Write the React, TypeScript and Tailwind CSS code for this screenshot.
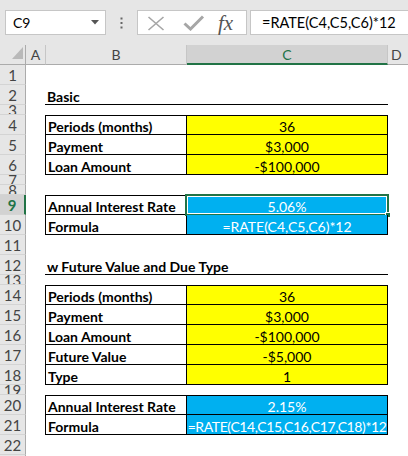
import React from "react";

type Cell = { text: string; cls?: string };
type Row = {
  n: number;
  h: number;
  kind?: "title" | "table";
  first?: boolean;
  b?: Cell;
  c?: Cell;
  selected?: boolean;
};

const YELLOW = "bg-[#ffff00] text-black";
const BLUE = "bg-[#00b0f0] text-white";

const rows: Row[] = [
  { n: 1, h: 20 },
  { n: 2, h: 20, kind: "title", b: { text: "Basic" } },
  { n: 3, h: 10 },
  { n: 4, h: 20, kind: "table", first: true, b: { text: "Periods (months)" }, c: { text: "36", cls: YELLOW } },
  { n: 5, h: 20, kind: "table", b: { text: "Payment" }, c: { text: "$3,000", cls: YELLOW } },
  { n: 6, h: 20, kind: "table", b: { text: "Loan Amount" }, c: { text: "-$100,000", cls: YELLOW } },
  { n: 7, h: 10 },
  { n: 8, h: 10 },
  { n: 9, h: 20, kind: "table", first: true, selected: true, b: { text: "Annual Interest Rate" }, c: { text: "5.06%", cls: BLUE } },
  { n: 10, h: 20, kind: "table", b: { text: "Formula" }, c: { text: "=RATE(C4,C5,C6)*12", cls: BLUE } },
  { n: 11, h: 20 },
  { n: 12, h: 20, kind: "title", b: { text: "w Future Value and Due Type" } },
  { n: 13, h: 10 },
  { n: 14, h: 20, kind: "table", first: true, b: { text: "Periods (months)" }, c: { text: "36", cls: YELLOW } },
  { n: 15, h: 20, kind: "table", b: { text: "Payment" }, c: { text: "$3,000", cls: YELLOW } },
  { n: 16, h: 20, kind: "table", b: { text: "Loan Amount" }, c: { text: "-$100,000", cls: YELLOW } },
  { n: 17, h: 20, kind: "table", b: { text: "Future Value" }, c: { text: "-$5,000", cls: YELLOW } },
  { n: 18, h: 20, kind: "table", b: { text: "Type" }, c: { text: "1", cls: YELLOW } },
  { n: 19, h: 10 },
  { n: 20, h: 20, kind: "table", first: true, b: { text: "Annual Interest Rate" }, c: { text: "2.15%", cls: BLUE } },
  {
    n: 21,
    h: 20,
    kind: "table",
    b: { text: "Formula" },
    c: { text: "=RATE(C14,C15,C16,C17,C18)*12", cls: `${BLUE} tracking-[-0.4px]` },
  },
  { n: 22, h: 20 },
  { n: 23, h: 20 },
];

function FormulaBar() {
  return (
    <div className="flex h-[45px] items-start bg-[#e6e6e6] pt-[10px]">
      <div className="ml-[5px] flex h-[25px] w-[101px] items-center justify-between border border-[#c6c6c6] bg-white pl-[7px] pr-[6px] text-[14px] text-black">
        <span>C9</span>
        <svg width="8" height="5" viewBox="0 0 8 5">
          <path d="M0 0 L8 0 L4 4.5 Z" fill="#555" />
        </svg>
      </div>
      <div className="flex h-[25px] w-[31px] items-center justify-center">
        <svg width="3" height="12" viewBox="0 0 3 12">
          <rect x="0.5" y="0.5" width="2" height="2" fill="#666" />
          <rect x="0.5" y="5" width="2" height="2" fill="#666" />
          <rect x="0.5" y="9.5" width="2" height="2" fill="#666" />
        </svg>
      </div>
      <div className="relative flex h-[25px] w-[110px] items-center border border-[#c6c6c6] bg-white">
        <svg className="absolute left-[9px] top-[5px]" width="18" height="15" viewBox="0 0 18 15">
          <path d="M1.5 1 L16.5 14 M16.5 1 L1.5 14" stroke="#a6a6a6" strokeWidth="1.6" fill="none" />
        </svg>
        <svg className="absolute left-[45px] top-[4px]" width="22" height="16" viewBox="0 0 22 16">
          <path d="M1.5 8.5 L7.5 14 L20 1.5" stroke="#a6a6a6" strokeWidth="3" fill="none" />
        </svg>
        <span className="absolute left-[80px] top-[0px] font-['Liberation_Serif',serif] text-[21px] italic leading-[24px] text-[#555]">
          fx
        </span>
      </div>
      <div className="ml-[3px] flex h-[25px] flex-1 items-center border-y border-l border-[#c6c6c6] bg-white pl-[11px] text-[14.5px] text-black">
        =RATE(C4,C5,C6)*12
      </div>
    </div>
  );
}

function ColumnHeader() {
  return (
    <div className="flex h-[20px] bg-[#e6e6e6] text-[14px] text-[#444]">
      <div className="relative w-[26px] border-b border-r border-[#ababab]">
        <svg className="absolute left-[12px] top-[2px]" width="11" height="12" viewBox="0 0 11 12">
          <path d="M11 0 L11 12 L0 12 Z" fill="#b9b9b9" />
        </svg>
      </div>
      <div className="flex w-[20px] items-center justify-center border-b border-r border-[#ababab] border-r-[#c6c6c6]">A</div>
      <div className="flex w-[141px] items-center justify-center border-b border-r border-[#ababab] border-r-[#c6c6c6]">B</div>
      <div className="flex w-[201px] items-center justify-center border-b-2 border-r border-[#217346] border-r-[#c6c6c6] bg-[#d2d2d2] text-[#217346]">
        C
      </div>
      <div className="flex flex-1 items-center justify-start border-b border-[#ababab] pl-[3px]">D</div>
    </div>
  );
}

function SheetRow({ r }: { r: Row }) {
  const isTable = r.kind === "table";
  const isTitle = r.kind === "title";
  const short = r.h < 20;
  const bCls = isTable
    ? `border-l border-r border-b border-black ${r.first ? "border-t" : ""}`
    : isTitle
      ? "border-b border-black"
      : "";
  const cCls = isTable
    ? `border-r border-b border-black ${r.first ? "border-t" : ""}`
    : isTitle
      ? "border-b border-black"
      : "";
  return (
    <div className="flex" style={{ height: r.h }}>
      <div
        className={`flex w-[26px] items-center justify-center overflow-hidden border-b border-[#d4d4d4] text-[15px] ${
          short ? "leading-[8px]" : "pt-[2px] leading-none"
        } ${
          r.selected
            ? "border-r-2 border-r-[#217346] bg-[#d2d2d2] font-bold text-[#217346]"
            : "border-r border-r-[#ababab] bg-[#e6e6e6] text-[#444]"
        }`}
      >
        {r.n}
      </div>
      <div className="w-[19px]" />
      <div className={`flex w-[142px] items-end whitespace-nowrap pl-[2px] text-[14px] font-bold leading-[15px] text-black ${bCls}`}>
        {r.b?.text}
      </div>
      <div className={`relative flex w-[201px] items-end justify-center whitespace-nowrap text-[14px] leading-[15px] ${r.c?.cls ?? ""} ${cCls}`}>
        {r.c?.text}
        {r.selected && (
          <>
            <div className="absolute -bottom-[2px] -left-[2px] -right-[2px] -top-[2px] border-2 border-[#217346]">
              <div className="absolute inset-0 border border-white" />
            </div>
            <div className="absolute -bottom-[4px] -right-[4px] h-[6px] w-[6px] border border-white bg-[#217346]" />
          </>
        )}
      </div>
      <div className="flex-1" />
    </div>
  );
}

export default function App() {
  return (
    <div className="h-[456px] w-[408px] overflow-hidden bg-white font-['Lato',sans-serif]">
      <FormulaBar />
      <ColumnHeader />
      {rows.map((r) => (
        <SheetRow key={r.n} r={r} />
      ))}
    </div>
  );
}
